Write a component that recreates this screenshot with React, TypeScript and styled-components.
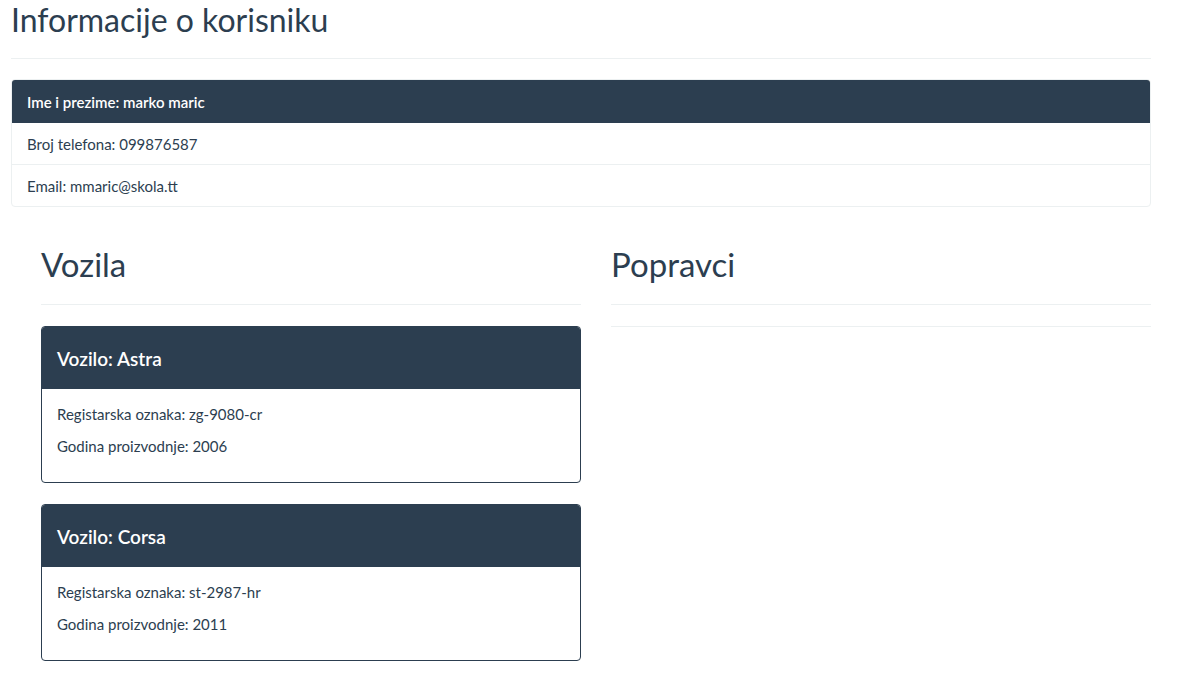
import React from "react";
import styled, { createGlobalStyle } from "styled-components";

const Global = createGlobalStyle`
  html, body { margin: 0; padding: 0; background: #fff; }
  body { font-family: Lato, "Open Sans", sans-serif; color: #2c3e50; font-size: 15px; }
  * { box-sizing: border-box; }
`;

const Container = styled.div`
  width: 1140px;
  margin-left: 11px;
`;

const Title = styled.h1`
  margin: 0;
  font-size: 32px;
  font-weight: 400;
  line-height: 40px;
`;

const Rule = styled.hr<{ $top: number; $bottom: number }>`
  border: 0;
  border-top: 1px solid #ecf0f1;
  margin: ${(p) => p.$top}px 0 ${(p) => p.$bottom}px;
`;

const Panel = styled.div`
  border: 1px solid #ecf0f1;
  border-radius: 4px;
  overflow: hidden;
`;

const PanelHead = styled.div`
  background: #2c3e50;
  color: #fff;
  font-weight: 600;
  font-size: 15px;
  height: 43px;
  padding: 0 15px;
  display: flex;
  align-items: center;
`;

const PanelRow = styled.div`
  height: 41px;
  padding: 0 15px;
  display: flex;
  align-items: center;
  font-size: 15px;
  & + & {
    height: 42px;
    border-top: 1px solid #ecf0f1;
  }
`;

const Columns = styled.div`
  display: grid;
  grid-template-columns: 540px 540px;
  column-gap: 30px;
  padding-left: 30px;
  margin-top: 37px;
`;

const Column = styled.div``;

const SectionTitle = styled.h2`
  margin: 0;
  font-size: 33px;
  font-weight: 400;
  line-height: 40px;
`;

const Card = styled.div`
  border: 1px solid #2c3e50;
  border-radius: 4px;
  overflow: hidden;
  margin-bottom: 21px;
`;

const CardHead = styled.div`
  background: #2c3e50;
  color: #fff;
  height: 62px;
  padding: 0 15px;
  display: flex;
  align-items: center;
  font-size: 19px;
  font-weight: 600;
`;

const CardBody = styled.div`
  padding: 16px 15px 27px;
  display: flex;
  flex-direction: column;
  gap: 14px;
`;

const Line = styled.div`
  font-size: 15px;
  line-height: 18px;
`;

const vehicles = [
  { name: "Astra", reg: "zg-9080-cr", year: 2006 },
  { name: "Corsa", reg: "st-2987-hr", year: 2011 },
];

export default function App() {
  return (
    <>
      <Global />
      <Container>
        <Title>Informacije o korisniku</Title>
        <Rule $top={18} $bottom={20} />
        <Panel>
          <PanelHead>Ime i prezime: marko maric</PanelHead>
          <PanelRow>Broj telefona: 099876587</PanelRow>
          <PanelRow>Email: mmaric@skola.tt</PanelRow>
        </Panel>
        <Columns>
          <Column>
            <SectionTitle>Vozila</SectionTitle>
            <Rule $top={20} $bottom={21} />
            {vehicles.map((v) => (
              <Card key={v.name}>
                <CardHead>Vozilo: {v.name}</CardHead>
                <CardBody>
                  <Line>Registarska oznaka: {v.reg}</Line>
                  <Line>Godina proizvodnje: {v.year}</Line>
                </CardBody>
              </Card>
            ))}
          </Column>
          <Column>
            <SectionTitle>Popravci</SectionTitle>
            <Rule $top={20} $bottom={21} />
            <Rule $top={0} $bottom={0} />
          </Column>
        </Columns>
      </Container>
    </>
  );
}
